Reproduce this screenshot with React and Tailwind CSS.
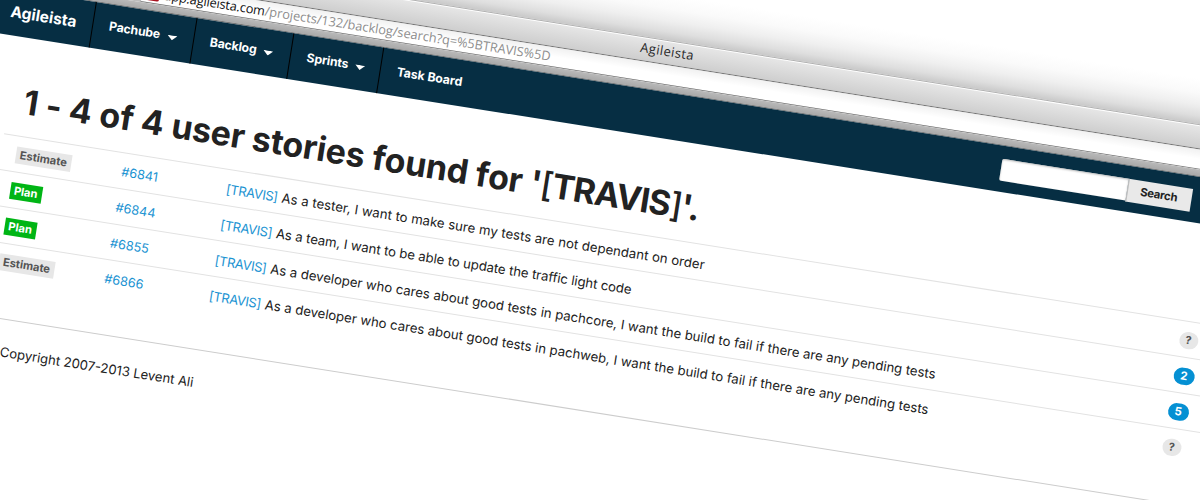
const menus = [
  { label: 'Pachube', width: 'w-[102px]', text: 'w-[51.4px]' },
  { label: 'Backlog', width: 'w-[98px]', text: 'w-[46px]' },
  { label: 'Sprints', width: 'w-[91px]', text: 'w-[41.5px]' },
];

const stories = [
  { status: 'Estimate', id: '#6841', title: 'As a tester, I want to make sure my tests are not dependant on order', points: '?', tracking: 'tracking-[0.04px]' },
  { status: 'Plan', id: '#6844', title: 'As a team, I want to be able to update the traffic light code', points: '2', tracking: 'tracking-[-0.07px]' },
  { status: 'Plan', id: '#6855', title: 'As a developer who cares about good tests in pachcore, I want the build to fail if there are any pending tests', points: '5', tracking: 'tracking-[0px]' },
  { status: 'Estimate', id: '#6866', title: 'As a developer who cares about good tests in pachweb, I want the build to fail if there are any pending tests', points: '?', tracking: 'tracking-[0px]' },
];

function BrowserChrome() {
  return (
    <div className="font-['Open_Sans',sans-serif]">
      <div className="h-[64.5px] bg-[linear-gradient(to_bottom,#fff_20px,#fafafa_34px,#efefef_46px,#dedede_57px,#cbcbcb_64px)]" />
      <div className="flex h-[25.3px] border-t border-b border-t-[#b0b0b0] border-b-[#707070] bg-gradient-to-b from-[#e7e7e7] to-[#cecece] pl-[640px] shadow-[inset_0_1px_0_#fff]">
        <span className="text-[13px] leading-[21px] font-medium tracking-[0.4px] text-[#2a2a2a]">Agileista</span>
      </div>
      <div className="flex h-[20.4px] bg-[#bcbcbc]">
        <div className="w-[127px] rounded-br-[3px] border-r border-b border-[#777] bg-[#d8d8d8]" />
        <div className="ml-[11px] flex flex-1 rounded-bl-[3px] border-b border-[#8a8a8a] bg-gradient-to-b from-[#f1f1f1] via-white to-white pl-[4px]">
          <div className="mt-[2px] h-[15px] w-[15px] rounded-[2px] bg-[#a8121f]" />
          <div className="ml-[5px] whitespace-nowrap text-[12.8px] leading-[19px] text-[#8e8e8e]">
            <span className="tracking-[-0.15px] text-[#111]">app.agileista.com</span>
            <span>/projects/132/backlog/search?q=%5BTRAVIS%5D</span>
          </div>
        </div>
      </div>
      <div className="h-[7.2px] border-b border-[#777] bg-gradient-to-b from-[#bababa] to-[#a9a9a9]" />
    </div>
  );
}

function NavBar() {
  return (
    <nav className="flex h-[45.6px] bg-[#062e43] font-bold text-white">
      <div className="w-[96.4px] border-r border-black pl-[12.4px] text-[15.6px] leading-[45px]">Agileista</div>
      {menus.map((m) => (
        <div key={m.label} className={`flex border-r border-black pl-[15.6px] ${m.width}`}>
          <span className={`text-[12.3px] leading-[44px] tracking-[-0.16px] ${m.text}`}>{m.label}</span>
          <svg className="mt-[20.6px] ml-[8px] h-[5px] w-[10px]" viewBox="0 0 10 5" fill="#fff">
            <path d="M0 0h10L5 5z" />
          </svg>
        </div>
      ))}
      <span className="pl-[15.8px] text-[12.3px] leading-[44px] tracking-[-0.06px]">Task Board</span>
      <form className="mt-[12.7px] ml-auto mr-[92.4px] flex h-[22.8px]">
        <div className="h-[21.6px] w-[128.6px] rounded-l-[2px] bg-white shadow-[inset_0_1px_2px_#bbb]" />
        <button type="button" className="w-[64.2px] border-l border-[#bbb] bg-[#e9e9e9] pr-[2px] text-[11.4px] leading-[23px] tracking-[-0.3px] text-[#222]">
          Search
        </button>
      </form>
    </nav>
  );
}

function Status({ value }) {
  return value === 'Plan' ? (
    <span className="h-[16.4px] w-[32px] bg-[#00b515] text-center text-[11.2px] leading-[16px] font-bold text-white">Plan</span>
  ) : (
    <span className="h-[16.4px] w-[56.3px] bg-[#e7e7e7] text-center text-[11.2px] leading-[16px] font-bold text-[#555]">Estimate</span>
  );
}

function Points({ value }) {
  return value === '?' ? (
    <span className="h-[17px] w-[19px] rounded-full bg-[#e7e7e7] text-center text-[11px] leading-[17px] font-bold text-[#555]">?</span>
  ) : (
    <span className="h-[17px] w-[21px] rounded-full bg-[#0590d3] text-center text-[11.5px] leading-[17px] font-bold text-white">{value}</span>
  );
}

export default function App() {
  return (
    <div className="h-[500px] w-[1200px] overflow-hidden bg-white">
      <div className="-mt-[130px] w-[1300px] origin-[0px_130px] rotate-[9deg] bg-white font-[Inter,sans-serif] text-[13.2px] text-[#222]">
        <BrowserChrome />
        <NavBar />
        <main>
          <h1 className="h-[98px] pt-[44px] pl-[39.5px] text-[34px] leading-[40px] font-bold tracking-[-0.13px] whitespace-nowrap">
            1 - 4 of 4 user stories found for{' '}
            <span className="tracking-[-0.95px]">
              '<span className="font-medium">[</span>TRAVIS<span className="font-medium">]</span>'.
            </span>
          </h1>
          <div className="ml-[25px]">
            {stories.map((s) => (
              <div key={s.id} className="flex h-[36px] border-t border-[#e2e2e2] pl-[14.6px]">
                <div className="flex w-[107.2px] pt-[10.4px]">
                  <Status value={s.status} />
                </div>
                <a className="w-[106.2px] pt-[9.2px] text-[12.7px] leading-[20px] text-[#1b93d2]">{s.id}</a>
                <div className="flex w-[964.6px] pt-[9.2px] leading-[20px] whitespace-nowrap">
                  <a className="w-[56.3px] text-[13px] tracking-[-0.38px] text-[#1b93d2]">[TRAVIS]</a>
                  <span className={s.tracking}>{s.title}</span>
                </div>
                <div className="flex pt-[9.9px]">
                  <Points value={s.points} />
                </div>
              </div>
            ))}
          </div>
          <footer className="mt-[39px] h-[200px] border-t border-[#ccc] pt-[22px] pl-[55px] text-[13.1px] leading-[20px]">
            Copyright 2007-2013 Levent Ali
          </footer>
        </main>
      </div>
    </div>
  );
}
